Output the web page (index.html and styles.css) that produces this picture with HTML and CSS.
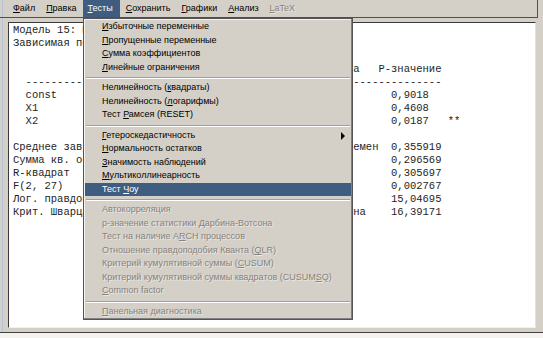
FILE: index.html
```html
<!DOCTYPE html>
<html lang="ru">
<head>
    <meta charset="UTF-8">
    <title>gretl: модель 15</title>
    <link rel="stylesheet" href="styles.css">
</head>
<body>

    <div class="window">
        <div class="menubar">
            <span class="mb-item"><u>Ф</u>айл</span>
            <span class="mb-item"><u>П</u>равка</span>
            <span class="mb-item active"><u>Т</u>есты</span>
            <span class="mb-item"><u>С</u>охранить</span>
            <span class="mb-item"><u>Г</u>рафики</span>
            <span class="mb-item"><u>А</u>нализ</span>
            <span class="mb-item disabled"><u>L</u>aTeX</span>
        </div>

        <div class="workspace">
<pre class="output">Модель 15: МНК, использованы наблюдения 1-30
Зависимая переменная: Y

             Коэффициент     Ст. ошибка    t-статистика   Р-значение
  ------------------------------------------------------------------
  const       -0,0734821     0,600103     -0,1245           0,9018
  X1          0,0382649      0,0510433    0,7497            0,4608
  X2          0,185022       0,0735120    2,517             0,0187   **

Среднее зав. перемен  0,166667      Ст. откл. зав. перемен  0,355919
Сумма кв. остатков    2,55174       Ст. ошибка модели       0,296569
R-квадрат             0,353528      Испр. R-квадрат         0,305697
F(2, 27)              7,38093       Р-значение (F)          0,002767
Лог. правдоподобие    -4,523474     Крит. Акаике            15,04695
Крит. Шварца          3,12648       Крит. Хеннана-Куинна    16,39171</pre>
        </div>

        <div class="statusbar"></div>

        <!-- выпадающее меню "Тесты" -->
        <div class="dropdown">
            <div class="item"><u>И</u>збыточные переменные</div>
            <div class="item"><u>П</u>ропущенные переменные</div>
            <div class="item"><u>С</u>умма коэффициентов</div>
            <div class="item"><u>Л</u>инейные ограничения</div>
            <div class="sep"></div>
            <div class="item">Нелинейность (<u>к</u>вадраты)</div>
            <div class="item">Нелинейность (<u>л</u>огарифмы)</div>
            <div class="item">Тест <u>Р</u>амсея (RESET)</div>
            <div class="sep"></div>
            <div class="item"><span class="arrow"></span><u>Г</u>етероскедастичность</div>
            <div class="item"><u>Н</u>ормальность остатков</div>
            <div class="item"><u>З</u>начимость наблюдений</div>
            <div class="item"><u>М</u>ультиколлинеарность</div>
            <div class="item selected">Тест <u>Ч</u>оу</div>
            <div class="sep"></div>
            <div class="item disabled">Автокорреляция</div>
            <div class="item disabled">р-значение статистики Дарбина-Вотсона</div>
            <div class="item disabled">Тест на наличие A<u>R</u>CH процессов</div>
            <div class="item disabled">Отношение правдоподобия Кванта (<u>Q</u>LR)</div>
            <div class="item disabled">Критерий кумулятивной суммы (<u>C</u>USUM)</div>
            <div class="item disabled">Критерий кумулятивной суммы квадратов (CUSUM<u>S</u>Q)</div>
            <div class="item disabled"><u>C</u>ommon factor</div>
            <div class="sep"></div>
            <div class="item disabled"><u>П</u>анельная диагностика</div>
        </div>
    </div>

</body>
</html>
```

FILE: styles.css
```css
* {
    margin: 0;
    padding: 0;
    box-sizing: border-box;
}

body {
    width: 543px;
    height: 338px;
    overflow: hidden;
    background-color: #d4d0c8;
    font-family: "Liberation Sans", Arial, sans-serif;
    font-size: 9px;
    color: #000;
}

u {
    text-decoration-skip-ink: none;
    text-underline-offset: 1px;
}

.window {
    position: relative;
    height: 338px;
    box-shadow: inset 2px 0 0 #d4d0c8, inset 3px 0 0 #b4c4d8;
}

/* строка меню */
.menubar {
    display: flex;
    gap: 1px;
    width: 538px;
    height: 18px;
    padding-left: 8px;
    border-bottom: 1px solid #505050;
    border-right: 1px solid #505050;
}

.mb-item {
    padding: 0 5px;
    line-height: 17px;
}

.mb-item:nth-child(3) {
    padding-right: 7px;
}

.mb-item.active {
    background-color: #3e5d80;
    color: #fff;
}

.mb-item.disabled {
    color: #86837d;
    text-shadow: 1px 1px 0 rgba(255, 255, 255, 0.5);
}

/* окно вывода */
.workspace {
    height: 306px;
    margin: 4px 7px 0 8px;
    background-color: #fff;
    border-top: 1px solid #3a3a3a;
    border-left: 1px solid #3a3a3a;
    border-right: 1px solid #e4e1da;
    border-bottom: 1px solid #f2f0ec;
    overflow: hidden;
}

.output {
    padding: 1px 0 0 4px;
    font-family: "Liberation Mono", "Courier New", monospace;
    font-size: 10.5px;
    line-height: 13px;
    color: #1e1e1e;
}

.statusbar {
    height: 6px;
    margin-top: 4px;
    background-color: #f4f3f0;
    border-top: 1px solid #404040;
}

/* выпадающее меню */
.dropdown {
    position: absolute;
    left: 83px;
    top: 18px;
    width: 270px;
    padding: 1px;
    background-color: #d4d0c8;
    border: 1px solid #555;
    box-shadow: inset -1px -1px 0 #808080, inset 1px 1px 0 #f4f2ee;
}

.item {
    height: 13.5px;
    line-height: 13.5px;
    padding-left: 17px;
    white-space: nowrap;
}

.item.selected {
    background-color: #3e5d80;
    color: #fff;
}

.item.disabled {
    color: #86837d;
    text-shadow: 1px 1px 0 rgba(255, 255, 255, 0.5);
}

.arrow {
    float: right;
    margin: 3px 6px 0 0;
    border-left: 4px solid #000;
    border-top: 4px solid transparent;
    border-bottom: 4px solid transparent;
}

.sep {
    margin: 3px 1px 2px;
    border-top: 1px solid #a29f98;
    border-bottom: 1px solid #fff;
}
```
